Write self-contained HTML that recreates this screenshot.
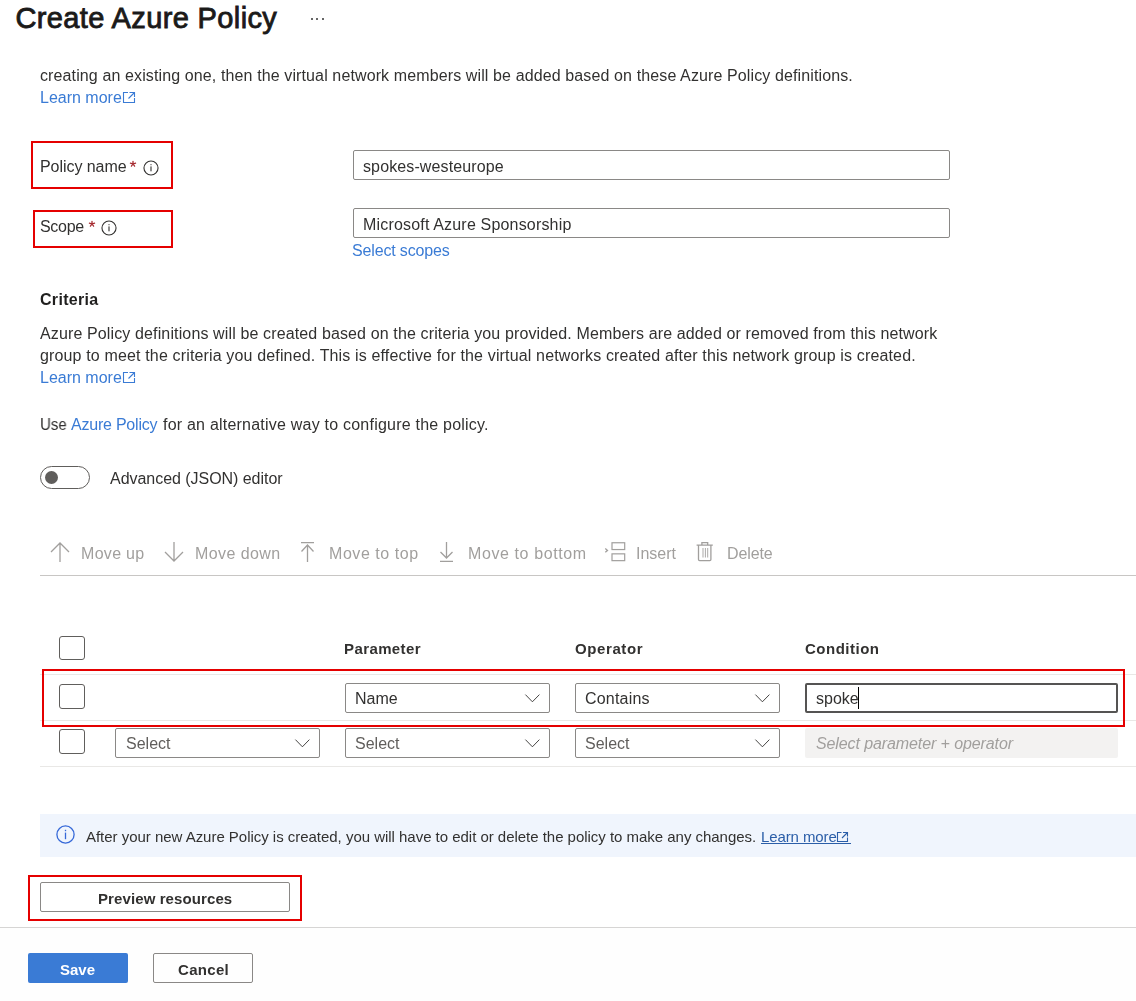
<!DOCTYPE html>
<html><head><meta charset="utf-8">
<style>
html,body{margin:0;padding:0;background:#fff;}
body{width:1136px;height:1001px;position:relative;overflow:hidden;font-family:"Liberation Sans",sans-serif;color:#323130;-webkit-font-smoothing:antialiased;}
.a{position:absolute;}
.t{position:absolute;white-space:nowrap;line-height:1;font-size:16px;will-change:transform;}
.b{font-weight:bold;}
.lk{color:#3a7bd5;}
.red{position:absolute;border:2px solid #e50000;box-sizing:border-box;}
.inp{position:absolute;border:1px solid #8a8886;border-radius:2px;box-sizing:border-box;background:#fff;}
.cb{position:absolute;width:26px;height:25px;border:1.5px solid #605e5c;border-radius:3px;box-sizing:border-box;}
.hl{position:absolute;height:1px;background:#e9e8e6;}
.tb{color:#a19f9d;}
svg{position:absolute;overflow:visible;}
</style></head>
<body>
<!-- Title -->
<div class="t" style="left:15.5px;top:3.5px;font-size:29px;color:#1b1a19;letter-spacing:0.37px;-webkit-text-stroke:0.85px #1b1a19;will-change:auto">Create Azure Policy</div>
<div class="a" style="left:311px;top:18.3px;width:2px;height:2px;background:#333;border-radius:1px"></div>
<div class="a" style="left:316.3px;top:18.3px;width:2px;height:2px;background:#333;border-radius:1px"></div>
<div class="a" style="left:322px;top:18.3px;width:2px;height:2px;background:#333;border-radius:1px"></div>

<div class="t" style="left:40px;top:68px;letter-spacing:0.118px">creating an existing one, then the virtual network members will be added based on these Azure Policy definitions.</div>
<div class="t lk" style="left:40px;top:90px">Learn more</div>
<svg style="left:123px;top:92px" width="12" height="11" viewBox="0 0 12 11"><path d="M5 0.5H0.5V10.5H11.5V6M6.5 0.5H11.5V5M11.5 0.5L5.5 6.5" fill="none" stroke="#3a7bd5" stroke-width="1.1"/></svg>

<!-- Policy name -->
<div class="red" style="left:31px;top:141px;width:142px;height:48px"></div>
<div class="t" style="left:40.1px;top:159px;letter-spacing:-0.05px">Policy name</div>
<svg style="left:129.2px;top:159.9px" width="8" height="8" viewBox="0 0 8 8"><path d="M4 4V1.3M4 4L6.6 3.15M4 4L5.6 6.2M4 4L2.4 6.2M4 4L1.4 3.15" fill="none" stroke="#a4262c" stroke-width="1.25" stroke-linecap="round"/></svg>
<svg style="left:142.8px;top:159.9px" width="16" height="16" viewBox="0 0 16 16"><circle cx="8" cy="8" r="7.05" fill="none" stroke="#323130" stroke-width="1.1"/><rect x="7.45" y="4.2" width="1.1" height="1" fill="#323130"/><rect x="7.45" y="6.4" width="1.1" height="4.9" fill="#323130"/></svg>
<div class="inp" style="left:353px;top:150px;width:597px;height:30px"></div>
<div class="t" style="left:362.7px;top:159px;letter-spacing:0.12px">spokes-westeurope</div>

<!-- Scope -->
<div class="red" style="left:33px;top:210px;width:140px;height:38px"></div>
<div class="t" style="left:40.1px;top:219px;letter-spacing:-0.3px">Scope</div>
<svg style="left:87.7px;top:219.9px" width="8" height="8" viewBox="0 0 8 8"><path d="M4 4V1.3M4 4L6.6 3.15M4 4L5.6 6.2M4 4L2.4 6.2M4 4L1.4 3.15" fill="none" stroke="#a4262c" stroke-width="1.25" stroke-linecap="round"/></svg>
<svg style="left:100.6px;top:219.9px" width="16" height="16" viewBox="0 0 16 16"><circle cx="8" cy="8" r="7.05" fill="none" stroke="#323130" stroke-width="1.1"/><rect x="7.45" y="4.2" width="1.1" height="1" fill="#323130"/><rect x="7.45" y="6.4" width="1.1" height="4.9" fill="#323130"/></svg>
<div class="inp" style="left:353px;top:208px;width:597px;height:30px"></div>
<div class="t" style="left:362.7px;top:217px;letter-spacing:0.18px">Microsoft Azure Sponsorship</div>
<div class="t lk" style="left:352.3px;top:243px;letter-spacing:-0.15px">Select scopes</div>

<!-- Criteria -->
<div class="t b" style="left:39.6px;top:292px;color:#201f1e;letter-spacing:0.3px">Criteria</div>
<div class="t" style="left:40px;top:326px;letter-spacing:0.13px">Azure Policy definitions will be created based on the criteria you provided. Members are added or removed from this network</div>
<div class="t" style="left:40px;top:348px;letter-spacing:0.15px">group to meet the criteria you defined. This is effective for the virtual networks created after this network group is created.</div>
<div class="t lk" style="left:40px;top:370px">Learn more</div>
<svg style="left:123px;top:372px" width="12" height="11" viewBox="0 0 12 11"><path d="M5 0.5H0.5V10.5H11.5V6M6.5 0.5H11.5V5M11.5 0.5L5.5 6.5" fill="none" stroke="#3a7bd5" stroke-width="1.1"/></svg>

<div class="t" style="left:40.3px;top:417px;transform:scaleX(0.94);transform-origin:0 0">Use</div>
<div class="t lk" style="left:71px;top:417px;letter-spacing:-0.22px">Azure Policy</div>
<div class="t" style="left:163px;top:417px;letter-spacing:0.22px">for an alternative way to configure the policy.</div>

<!-- toggle -->
<div class="a" style="left:40px;top:466px;width:50px;height:23px;border:1px solid #605e5c;border-radius:11.5px;box-sizing:border-box"></div>
<div class="a" style="left:44.5px;top:471px;width:13px;height:13px;border-radius:6.5px;background:#605e5c"></div>
<div class="t" style="left:110px;top:471px;letter-spacing:-0.04px">Advanced (JSON) editor</div>

<!-- toolbar -->
<svg style="left:50px;top:542px" width="20" height="20" viewBox="0 0 20 20"><path d="M10 20V1M1 10L10 1L19 10" fill="none" stroke="#a19f9d" stroke-width="1.3"/></svg>
<div class="t tb" style="left:80.7px;top:546px;letter-spacing:0.3px">Move up</div>
<svg style="left:164px;top:542px" width="20" height="20" viewBox="0 0 20 20"><path d="M10 0V19M1 10L10 19L19 10" fill="none" stroke="#a19f9d" stroke-width="1.3"/></svg>
<div class="t tb" style="left:194.5px;top:546px;letter-spacing:0.42px">Move down</div>
<svg style="left:301px;top:542px" width="14" height="20" viewBox="0 0 14 20"><path d="M0 0.6H13M6.5 20V3M0.5 9.5L6.5 3L12.5 9.5" fill="none" stroke="#a19f9d" stroke-width="1.3"/></svg>
<div class="t tb" style="left:329.4px;top:546px;letter-spacing:0.55px">Move to top</div>
<svg style="left:440px;top:542px" width="14" height="20" viewBox="0 0 14 20"><path d="M0 19.4H13M6.5 0V16M0.5 10L6.5 16L12.5 10" fill="none" stroke="#a19f9d" stroke-width="1.3"/></svg>
<div class="t tb" style="left:468px;top:546px;letter-spacing:0.6px">Move to bottom</div>
<svg style="left:604px;top:541px" width="22" height="22" viewBox="0 0 22 22"><path d="M1.3 7.6L3.5 9.45L1.3 11.3" fill="none" stroke="#a19f9d" stroke-width="1.3"/><rect x="8" y="1.75" width="12.7" height="6.8" fill="none" stroke="#a19f9d" stroke-width="1.2"/><rect x="8" y="12.85" width="12.7" height="6.8" fill="none" stroke="#a19f9d" stroke-width="1.2"/></svg>
<div class="t tb" style="left:636px;top:546px">Insert</div>
<svg style="left:696px;top:541px" width="18" height="22" viewBox="0 0 18 22"><path d="M5.9 3.8V1.7H11.7V3.8M0.6 4.1H16.8M2.5 4.5V18.5Q2.5 19.6 3.6 19.6H13.8Q14.9 19.6 14.9 18.5V4.5" fill="none" stroke="#a19f9d" stroke-width="1.3"/><path d="M7 7V16.5M9.4 7V16.5M11.7 7V16.5" fill="none" stroke="#a19f9d" stroke-width="0.9"/></svg>
<div class="t tb" style="left:726.5px;top:546px;letter-spacing:-0.1px">Delete</div>
<div class="hl" style="left:40px;top:575px;width:1096px;background:#c8c6c4"></div>

<!-- table -->
<div class="cb" style="left:59px;top:636px;height:24px"></div>
<div class="t b" style="left:344.2px;top:641px;font-size:15px;letter-spacing:0.4px">Parameter</div>
<div class="t b" style="left:574.8px;top:641px;font-size:15px;letter-spacing:0.6px">Operator</div>
<div class="t b" style="left:805.4px;top:641px;font-size:15px;letter-spacing:0.5px">Condition</div>

<div class="hl" style="left:40px;top:674px;width:1096px"></div>
<div class="hl" style="left:40px;top:720px;width:1096px"></div>
<div class="hl" style="left:40px;top:766px;width:1096px"></div>

<div class="cb" style="left:59px;top:684px"></div>
<div class="inp" style="left:345px;top:683px;width:205px;height:30px"></div>
<div class="t" style="left:355.4px;top:691px">Name</div>
<svg style="left:525px;top:694px" width="15" height="9" viewBox="0 0 15 9"><path d="M0.4 0.6L7.4 7.8L14.4 0.6" fill="none" stroke="#323130" stroke-width="0.9"/></svg>
<div class="inp" style="left:575px;top:683px;width:205px;height:30px"></div>
<div class="t" style="left:585.2px;top:691px;letter-spacing:0.2px">Contains</div>
<svg style="left:755px;top:694px" width="15" height="9" viewBox="0 0 15 9"><path d="M0.4 0.6L7.4 7.8L14.4 0.6" fill="none" stroke="#323130" stroke-width="0.9"/></svg>
<div class="a" style="left:805px;top:683px;width:313px;height:30px;border:2px solid #555453;border-radius:2px;box-sizing:border-box"></div>
<div class="t" style="left:816.3px;top:691px">spoke</div>
<div class="a" style="left:858px;top:687px;width:1px;height:22px;background:#000"></div>

<div class="cb" style="left:59px;top:729px"></div>
<div class="inp" style="left:115px;top:728px;width:205px;height:30px"></div>
<div class="t" style="left:125.8px;top:736px;color:#605e5c">Select</div>
<svg style="left:295px;top:739px" width="15" height="9" viewBox="0 0 15 9"><path d="M0.4 0.6L7.4 7.8L14.4 0.6" fill="none" stroke="#323130" stroke-width="0.9"/></svg>
<div class="inp" style="left:345px;top:728px;width:205px;height:30px"></div>
<div class="t" style="left:355.4px;top:736px;color:#605e5c">Select</div>
<svg style="left:525px;top:739px" width="15" height="9" viewBox="0 0 15 9"><path d="M0.4 0.6L7.4 7.8L14.4 0.6" fill="none" stroke="#323130" stroke-width="0.9"/></svg>
<div class="inp" style="left:575px;top:728px;width:205px;height:30px"></div>
<div class="t" style="left:585.2px;top:736px;color:#605e5c">Select</div>
<svg style="left:755px;top:739px" width="15" height="9" viewBox="0 0 15 9"><path d="M0.4 0.6L7.4 7.8L14.4 0.6" fill="none" stroke="#323130" stroke-width="0.9"/></svg>
<div class="a" style="left:805px;top:728px;width:313px;height:30px;background:#f3f2f1;border-radius:2px"></div>
<div class="t" style="left:815.6px;top:736px;font-style:italic;color:#a19f9d;letter-spacing:-0.1px">Select parameter + operator</div>

<div class="red" style="left:42px;top:669px;width:1083px;height:58px"></div>

<!-- info bar -->
<div class="a" style="left:40px;top:814px;width:1096px;height:43px;background:#f0f5fd"></div>
<svg style="left:56px;top:825px" width="19" height="19" viewBox="0 0 19 19"><circle cx="9.5" cy="9.5" r="8.6" fill="none" stroke="#3568d8" stroke-width="1.3"/><rect x="8.85" y="4.8" width="1.3" height="1.4" fill="#3568d8"/><rect x="8.85" y="7.6" width="1.3" height="6.6" fill="#3568d8"/></svg>
<div class="t" style="left:85.8px;top:829px;font-size:15px;letter-spacing:-0.026px">After your new Azure Policy is created, you will have to edit or delete the policy to make any changes.</div>
<div class="t" style="left:761px;top:829px;font-size:15px;color:#2b5ea8;letter-spacing:-0.1px">Learn more</div>
<div class="a" style="left:761px;top:843px;width:89.5px;height:1px;background:#2b5ea8"></div>
<svg style="left:837px;top:831.5px" width="11" height="10" viewBox="0 0 11 10"><path d="M4.5 0.5H0.5V9.5H10.5V5.5M6 0.5H10.5V4.5M10.5 0.5L5 6" fill="none" stroke="#2b5ea8" stroke-width="1.1"/></svg>

<!-- preview -->
<div class="red" style="left:28px;top:874.5px;width:274px;height:46px"></div>
<div class="a" style="left:40px;top:882px;width:250px;height:30px;border:1px solid #8a8886;border-radius:2px;box-sizing:border-box"></div>
<div class="t b" style="left:98.4px;top:891px;font-size:15px;letter-spacing:0.1px">Preview resources</div>

<div class="a" style="left:0;top:928px;width:1136px;height:73px;background:#fefefe"></div>
<div class="hl" style="left:0;top:927px;width:1136px;background:#d6d5d4"></div>
<div class="a" style="left:28px;top:953px;width:100px;height:30px;background:#3a7bd5;border-radius:2px"></div>
<div class="t b" style="left:60px;top:962px;font-size:15px;color:#fff">Save</div>
<div class="a" style="left:153px;top:953px;width:100px;height:30px;border:1px solid #8a8886;border-radius:2px;box-sizing:border-box"></div>
<div class="t b" style="left:178.4px;top:962px;font-size:15px;letter-spacing:0.3px">Cancel</div>
</body></html>
